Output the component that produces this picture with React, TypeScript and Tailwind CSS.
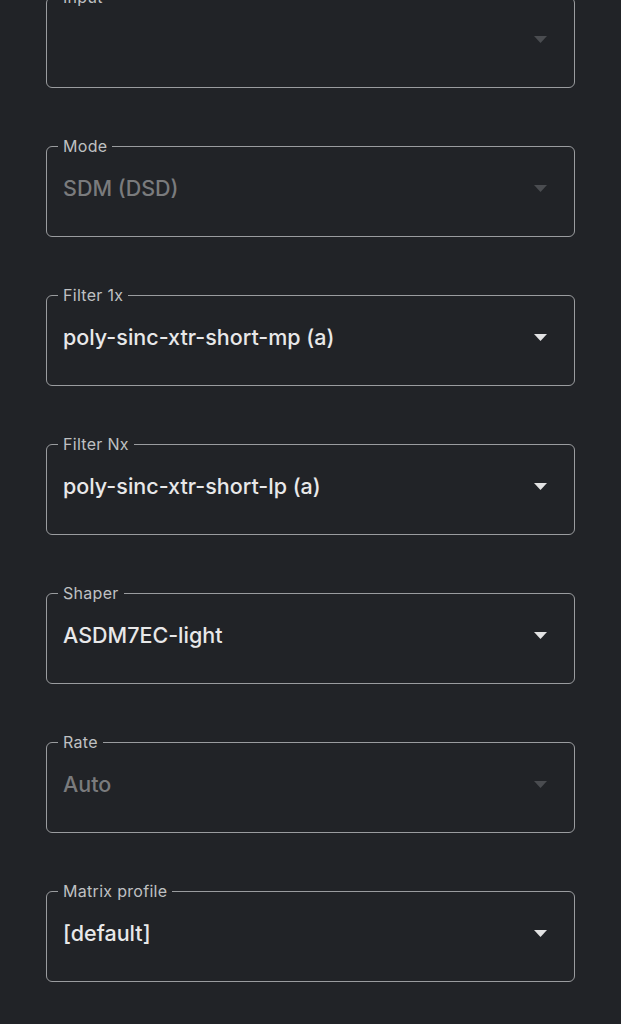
import React from 'react';

type Field = { label: string; value: string; disabled?: boolean };

const FIELDS: Field[] = [
  { label: 'Input', value: '', disabled: true },
  { label: 'Mode', value: 'SDM (DSD)', disabled: true },
  { label: 'Filter 1x', value: 'poly-sinc-xtr-short-mp (a)' },
  { label: 'Filter Nx', value: 'poly-sinc-xtr-short-lp (a)' },
  { label: 'Shaper', value: 'ASDM7EC-light' },
  { label: 'Rate', value: 'Auto', disabled: true },
  { label: 'Matrix profile', value: '[default]' },
];

function SelectField({ field }: { field: Field }) {
  return (
    <fieldset className="h-[100px] rounded-[6px] border border-[#9a9c9f] pl-[11px] pr-[27px] m-0 min-w-0">
      {/* Outlined label */}
      <legend className="px-[5px] text-[16px] leading-[18px] tracking-[0.3px] text-[#bfc0c2]">
        {field.label}
      </legend>
      <div className="flex items-center justify-between pl-[5px] mt-[20px] h-[26px]">
        <span
          className={
            'text-[21.5px] leading-[26px] font-medium ' +
            (field.disabled ? 'text-[#7a7b7d]' : 'text-[#e8e8e9]')
          }
        >
          {field.value}
        </span>
        <svg width="13" height="7" viewBox="0 0 13 7" className="shrink-0">
          <polygon points="0,0 13,0 6.5,7" fill={field.disabled ? '#4a4c50' : '#e2e2e3'} />
        </svg>
      </div>
    </fieldset>
  );
}

export default function App() {
  return (
    <div
      className="min-h-[1024px] w-full bg-[#212327] overflow-hidden"
      style={{ fontFamily: 'Inter, Roboto, "Noto Sans", sans-serif' }}
    >
      <div className="flex flex-col gap-[49px] pl-[46px] pr-[46px] -mt-[12px]">
        {FIELDS.map((f) => (
          <SelectField key={f.label} field={f} />
        ))}
      </div>
    </div>
  );
}
